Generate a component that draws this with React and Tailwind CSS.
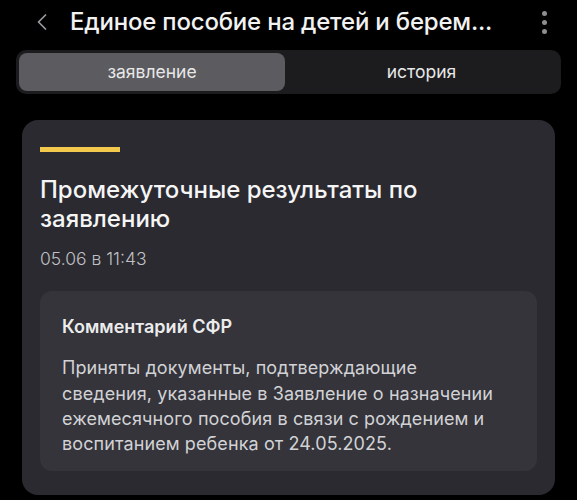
import { ChevronLeft } from 'lucide-react';

export default function App() {
  return (
    <div className="w-[577px] h-[500px] bg-black overflow-hidden text-white" style={{ fontFamily: 'Inter, "Noto Sans", sans-serif' }}>
      <div className="flex items-center h-[44px] pl-[28px] pr-[30px]">
        <ChevronLeft className="w-[28px] h-[28px] text-[#9a9aa0] shrink-0" strokeWidth={1.5} />
        <h1 className="ml-[14px] text-[24px] font-medium tracking-[-0.2px] text-[#f2f2f2] truncate flex-1">
          Единое пособие на детей и берем...
        </h1>
        <div className="flex flex-col gap-[4px] items-center ml-auto">
          <span className="w-[5px] h-[5px] rounded-full bg-[#8e8e93]" />
          <span className="w-[5px] h-[5px] rounded-full bg-[#8e8e93]" />
          <span className="w-[5px] h-[5px] rounded-full bg-[#8e8e93]" />
        </div>
      </div>

      <div className="mx-[16px] mt-[6px] h-[44px] rounded-[10px] bg-[#1c1c1f] p-[3px] flex">
        <div className="w-[266px] rounded-[8px] bg-[#5b5b60] flex items-center justify-center text-[17.5px] text-[#e8e8e8]">
          заявление
        </div>
        <div className="flex-1 flex items-center justify-center text-[17.5px] text-[#e8e8e8]">
          история
        </div>
      </div>

      <div className="mx-[22px] mt-[26px] rounded-[16px] bg-[#2a2a30] px-[18px] pt-[27px] pb-[24px]">
        <div className="w-[80px] h-[5px] bg-[#f2c94c]" />
        <h2 className="mt-[23px] text-[24px] leading-[29px] font-medium text-[#f5f5f5]">
          Промежуточные результаты по<br />заявлению
        </h2>
        <div className="mt-[13px] text-[17.5px] font-light text-[#c0c0c4]">05.06 в 11:43</div>

        <div className="mt-[19px] rounded-[12px] bg-[#34343a] pl-[22px] pr-[12px] pt-[22px] pb-[15px]">
          <div className="text-[18px] font-semibold text-[#ececec]">Комментарий СФР</div>
          <p className="mt-[15px] text-[18px] leading-[25.3px] tracking-[0.1px] text-[#d2d2d6]">
            Приняты документы, подтверждающие<br />
            сведения, указанные в Заявление о назначении<br />
            ежемесячного пособия в связи с рождением и<br />
            воспитанием ребенка от 24.05.2025.
          </p>
        </div>
      </div>
    </div>
  );
}
